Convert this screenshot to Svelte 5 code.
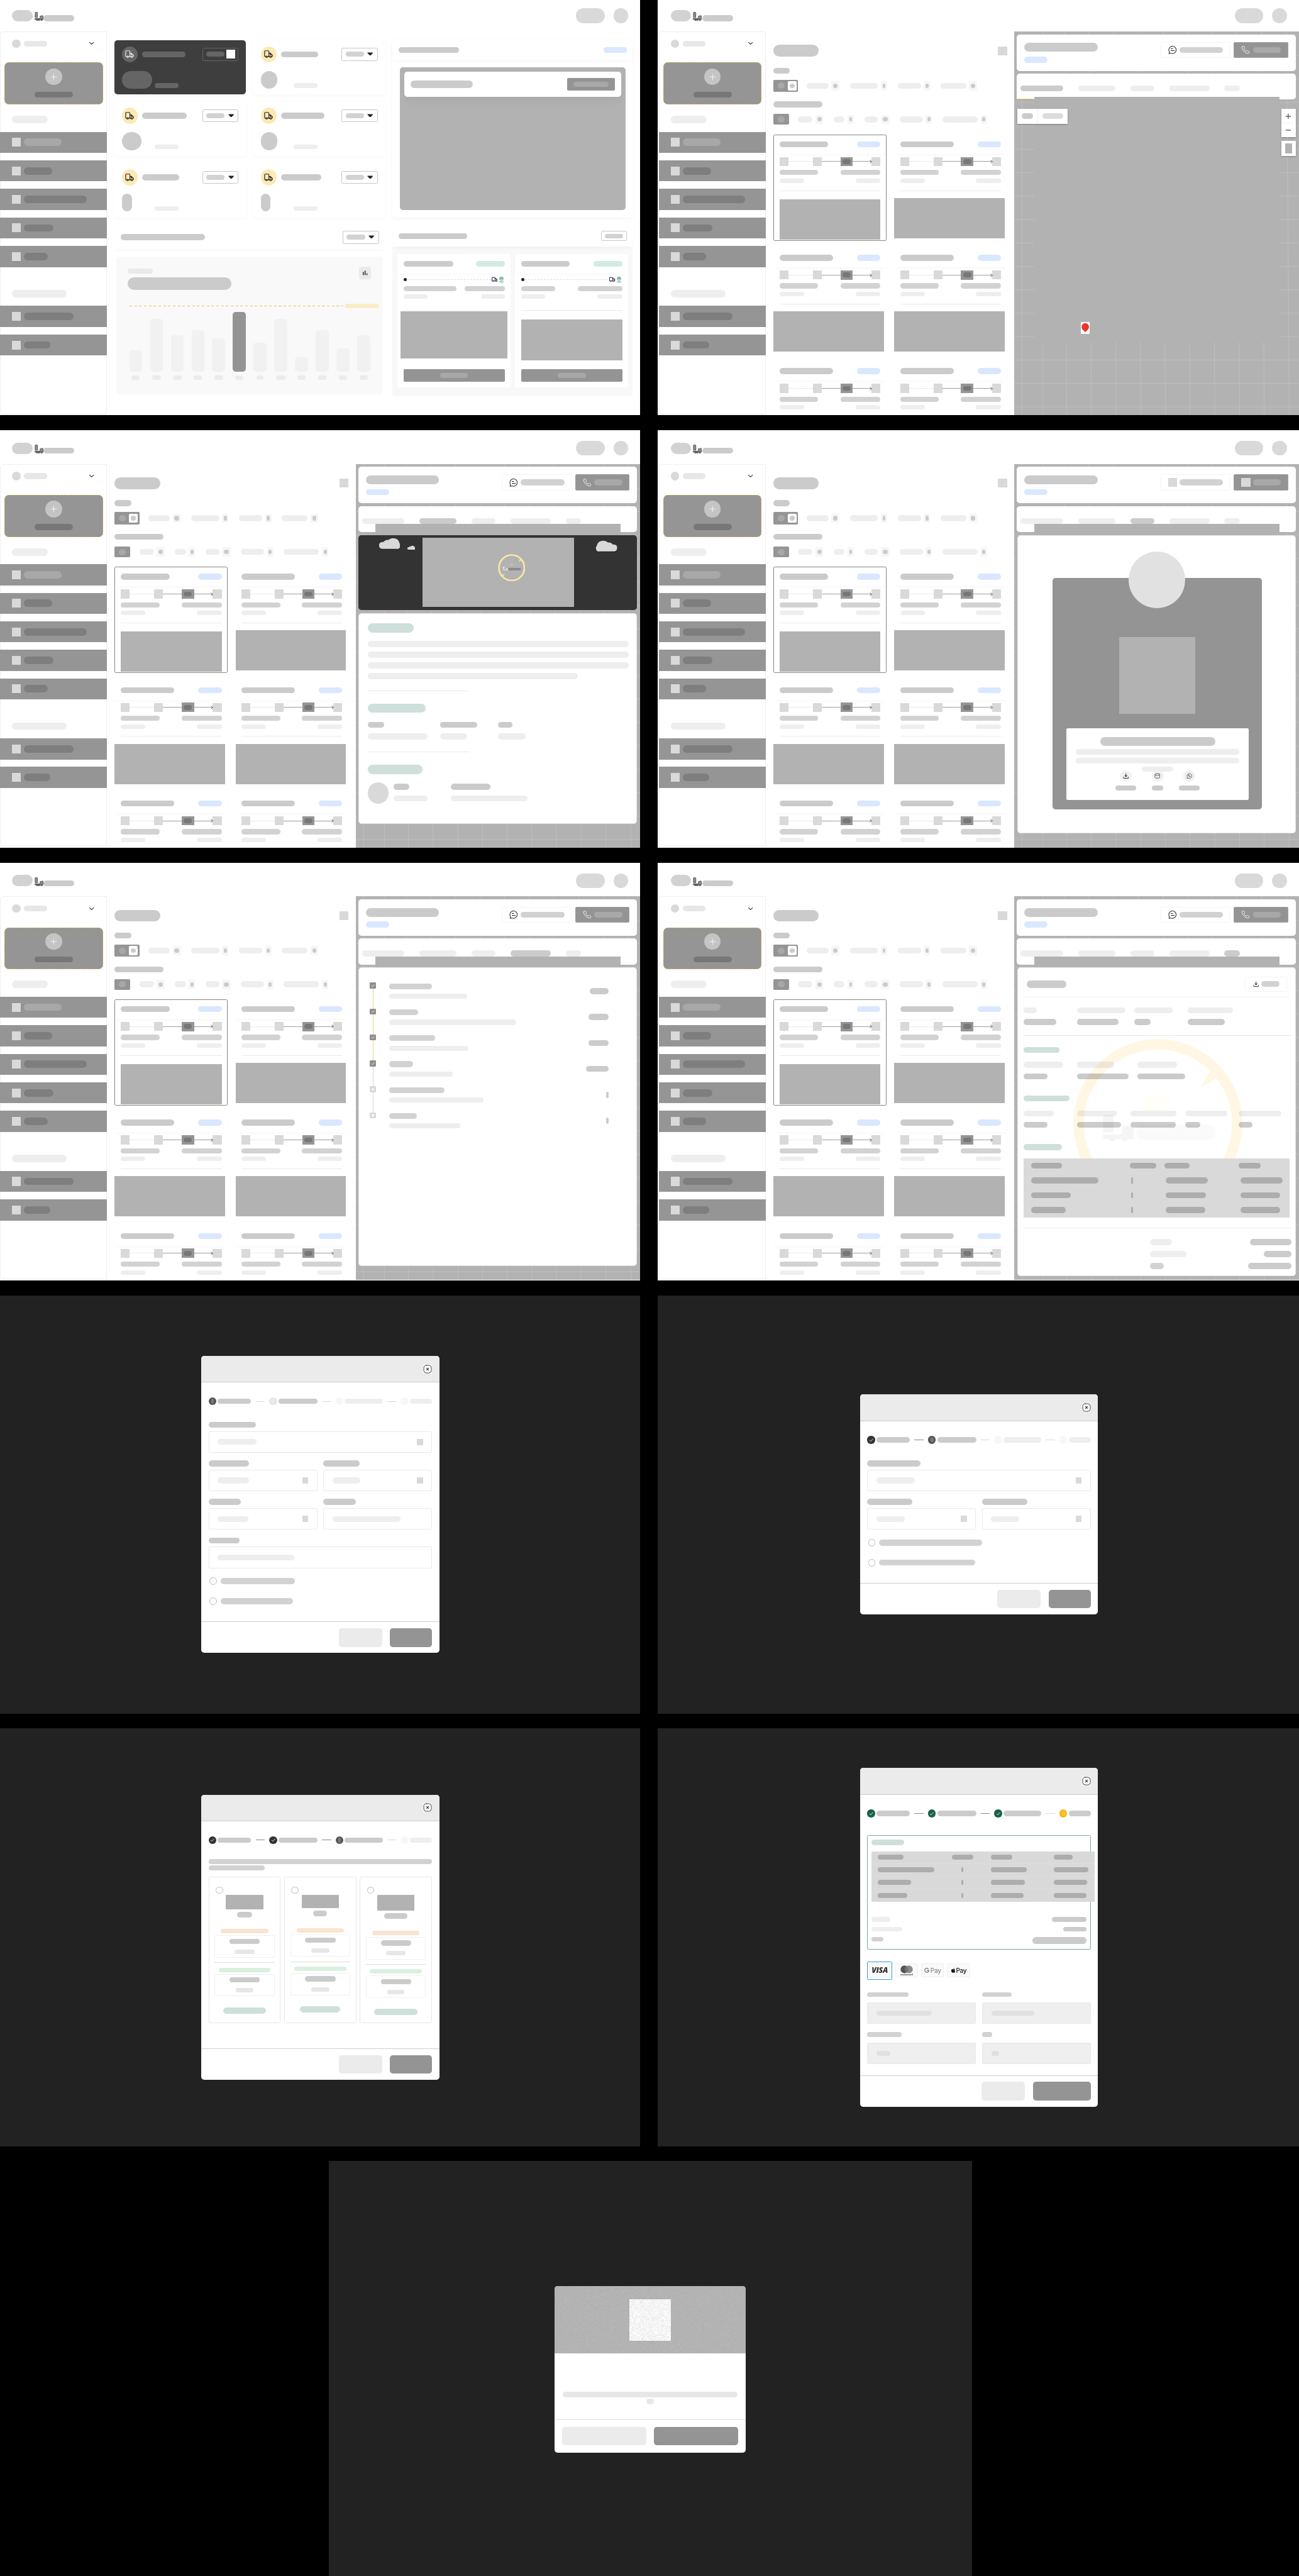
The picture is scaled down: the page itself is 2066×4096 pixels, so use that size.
<script>
  const stats = [
    { title: 116, value: 81, dark: true },
    { title: 100, value: 44 },
    { title: 120, value: 53 },
    { title: 117, value: 44 },
    { title: 99, value: 27 },
    { title: 108, value: 26 }
  ];
  const chart = [
    [58, 22], [142, 23], [98, 24], [112, 22], [90, 24], [161, 22],
    [78, 18], [142, 25], [39, 22], [112, 21], [63, 23], [98, 23]
  ];
  const navMain = [102, 77, 169, 80, 64];
  const navMore = [134, 71];
  const statusTabs = [[58, 22, 12], [76, 17, 8], [63, 17, 8], [69, 21, 11]];
  const typeTabs = [[39, 21, 12], [30, 17, 8], [37, 23, 14], [62, 17, 8], [95, 18, 8]];
  const shipments = [
    { id: 134, from: 143, to: 108, d1: 65, d2: 63, wide: true },
    { id: 131, from: 91, to: 121, d1: 65, d2: 68, wide: false }
  ];
  const detailTabs = [115, 101, 65, 109, 42];
  const history = [
    [116, 211, 52, true], [78, 342, 55, true], [123, 214, 55, true],
    [65, 171, 61, true], [149, 255, 8, false], [75, 191, 8, false]
  ];
  const invoiceRows = [[83, 71, 69, 60], [182, 6, 114, 114], [107, 6, 108, 108], [94, 6, 107, 107]];
  const paymentRows = [[69, 59, 58, 51], [153, 5, 96, 94], [90, 5, 91, 91], [79, 5, 89, 89]];
  const plans = [
    { img: 40, name: 40, a: 81, b: 53, c: 80, d: 47, total: 115 },
    { img: 37, name: 37, a: 82, b: 49, c: 84, d: 50, total: 109 },
    { img: 44, name: 62, a: 82, b: 52, c: 82, d: 46, total: 118 }
  ];
  const stepWidths = [90, 105, 102, 60];
  const gridX = [142, 208.6, 275.3, 342, 408.5, 475, 541.5, 608.5, 675, 742.5];
  const gridY = Array.from({ length: 16 }, (_, i) => 150 - 85 + i * 63.2);
</script>

{#snippet bar(w, tone = 'c', h = 16)}
  <i class="bar {tone}" style:width="{w}px" style:height="{h}px"></i>
{/snippet}

{#snippet truck()}
  <svg class="truck" viewBox="0 0 24 24" fill="none" stroke="currentColor" stroke-width="2" stroke-linecap="round" stroke-linejoin="round">
    <path d="M4.500 18.500H3.200A1.700 1.700 0 0 1 1.500 16.800V5A2 2 0 0 1 3.500 3H11a2 2 0 0 1 2 2V18.500H9" />
    <path d="M13 9.500h3.600a2.500 2.500 0 0 1 2 1.200l1.600 2.500 2.300 1.300v2.500a1.500 1.500 0 0 1-1.500 1.500M13 18.500h2.500M16.500 10v3.500h4" />
    <circle cx="6.800" cy="19" r="2" /><circle cx="18" cy="19" r="2" />
  </svg>
{/snippet}

{#snippet mixer()}
  <svg class="mixer" viewBox="0 0 24 24" fill="#8d8d8d" stroke="#3a3a3a" stroke-width="1.300">
    <rect x="1.500" y="1" width="6.500" height="14" rx="1.500" />
    <path d="M1 17.500h14v-6.500h3l1.500-1h3l.500 10.500H1z" />
    <circle cx="7" cy="21.500" r="2" /><circle cx="12" cy="21.500" r="2" /><circle cx="19" cy="21.500" r="2" />
  </svg>
{/snippet}

{#snippet chat()}
  <svg class="ic24" viewBox="0 0 24 24" fill="none" stroke="#222" stroke-width="1.700" stroke-linecap="round" stroke-linejoin="round">
    <path d="M2.800 17A9.900 9.900 0 1 1 7.500 21.400L2 22.400c.8-1.600 1.300-3.200.8-5.400z" />
    <path d="M7.500 9.500h4.500M7.500 14.500h9" />
  </svg>
{/snippet}

{#snippet phone()}
  <svg class="ic24" viewBox="0 0 24 24" fill="none" stroke="#fff" stroke-width="1.500" stroke-linejoin="round">
    <path d="M3 2.800h3.600c1.500 0 3.300 3.600 2.800 4.800-.5 1.300-2 1.800-1.300 3.200 1 2 2.800 3.900 5 5 1.500.7 2-.8 3.200-1.300 1.300-.5 5.200 1.600 5.200 3v2.400c0 1.500-1.800 2.100-4 1.800C10.500 20.700 3.300 13.600 2.200 6.700c-.3-1.800-.2-3.600.8-3.900z" />
  </svg>
{/snippet}

{#snippet download()}
  <svg class="ic16" viewBox="0 0 16 16" fill="none" stroke="#333" stroke-width="1.700" stroke-linecap="round" stroke-linejoin="round">
    <path d="M8 1.500v8M5 7l3 3 3-3M1.500 11v1.500A2 2 0 0 0 3.500 14.500h9a2 2 0 0 0 2-2V11" />
  </svg>
{/snippet}

{#snippet check()}
  <svg class="check" viewBox="0 0 16 16" fill="none" stroke="#fff" stroke-width="1.500" stroke-linecap="round" stroke-linejoin="round"><path d="M4 8.800l2.700 2.600L12.300 5.300" /></svg>
{/snippet}

{#snippet cloud(cls)}
  <svg class="cloud {cls}" viewBox="0 0 57 34">
    <path d="M9 34a9.500 9.500 0 0 1 0-19h3a15 15 0 0 1 13-6 17 17 0 0 1 29 9 8 8 0 0 1-5 15z" fill="#222" />
    <path d="M9 32a9.500 9.500 0 0 1 0-19h3A15 15 0 0 1 25 7.500 17 14 0 0 1 54.500 16a8 9 0 0 1-6 16z" fill="#d9d9d9" />
  </svg>
{/snippet}

{#snippet badge(cls)}
  <svg class={cls} viewBox="0 0 460 460">
    <circle cx="230" cy="230" r="214" fill="none" stroke="#fde6a6" stroke-width="28" />
    <path d="M371 88l-26 45 43-26zM89 372l26-45-43 26z" fill="#fde6a6" />
    <rect class="tag" x="191" y="155" width="78" height="41" rx="20" />
    <g class="mark">
      <rect x="82" y="208" width="28" height="46" rx="5" />
      <path d="M82 259h52v-18q0-5 5-5h14q12 2 12 14v16q0 6-6 6H92q-10 0-10-6z" />
      <circle cx="107" cy="271" r="8" /><circle cx="140" cy="271" r="8" />
    </g>
    <rect class="name" x="171" y="233" width="215" height="41" rx="20" />
  </svg>
{/snippet}

{#snippet header()}
  <header class="top">
    {@render bar(56, 'd', 31)}
    {@render mixer()}
    <span class="brand">{@render bar(84, 'c', 16)}</span>
    <span class="grow"></span>
    {@render bar(77, 'd2', 40)}
    {@render bar(40, 'd2', 40)}
  </header>
{/snippet}

{#snippet sidebar()}
  <aside class="side">
    <div class="account">
      {@render bar(23, 'd2', 23)}
      {@render bar(62, 'e7', 16)}
      <svg viewBox="0 0 16 10" fill="none" stroke="#222" stroke-width="1.700" stroke-linecap="round" stroke-linejoin="round"><path d="M2.500 2.500L8 7.500l5.500-5" /></svg>
    </div>
    <div class="create">
      <span class="plus"><svg viewBox="0 0 20 20" stroke="#fff" stroke-width="1.500"><path d="M10 1v18M1 10h18" /></svg></span>
      {@render bar(104, 'x77')}
    </div>
    <div class="navlabel">{@render bar(97, 'e', 20)}</div>
    <nav>
      {#each navMain as w, i}
        <a href="#nav"><i class="sq"></i>{@render bar(w, i === 0 ? 'a9' : 'x7f', 20)}</a>
      {/each}
    </nav>
    <div class="navlabel second">{@render bar(148, 'e', 20)}</div>
    <nav>
      {#each navMore as w}
        <a href="#nav"><i class="sq"></i>{@render bar(w, 'x7f', 20)}</a>
      {/each}
    </nav>
  </aside>
{/snippet}

{#snippet dropdown(dark = false)}
  <span class="drop" class:dark>
    {@render bar(50, dark ? 'x66' : 'd', 13)}
    {#if dark}
      <i class="blank"></i>
    {:else}
      <svg viewBox="0 0 16 10"><path d="M1 1h14v1.500L9.500 8.500h-3L1 2.500z" fill="#222" /></svg>
    {/if}
  </span>
{/snippet}

{#snippet list()}
  <section class="list">
    <div class="listhead">{@render bar(123, 'c', 32)}<i class="sq"></i></div>
    <div class="l1">{@render bar(45)}</div>
    <div class="tabs t1">
      <span class="on">{@render bar(19, 'a9', 17)}<b>{@render bar(14, 'c', 12)}</b></span>
      {#each statusTabs as [w, b, e]}
        <span class="tab">{@render bar(w, 'e')}<b style:width="{b}px">{@render bar(e, 'c', 12)}</b></span>
      {/each}
    </div>
    <div class="l2">{@render bar(133)}</div>
    <div class="tabs t2">
      <span class="on short">{@render bar(19, 'a9', 17)}</span>
      {#each typeTabs as [w, b, e]}
        <span class="tab">{@render bar(w, 'e')}<b style:width="{b}px">{@render bar(e, 'c', 12)}</b></span>
      {/each}
    </div>
    <div class="cards">
      {#each [0, 1, 2, 3, 4, 5] as n}
        <article class="order" class:selected={n === 0}>
          <div class="ohead">{@render bar(n === 0 ? 132 : 145)}{@render bar(63, 'blue')}</div>
          <div class="route">
            <i class="sq"></i><i class="dots"></i><i class="sq"></i><i class="ln"></i>
            <span class="tagbox">{@render bar(22, 'x77', 13)}</span>
            <i class="ln arrow"></i><i class="sq"></i>
          </div>
          <div class="pair p1">{@render bar(105, 'd', 14)}{@render bar(108, 'd', 14)}</div>
          <div class="pair p2">{@render bar(67, 'e', 12)}{@render bar(67, 'e', 12)}</div>
          <hr />
          <div class="pic"></div>
        </article>
      {/each}
    </div>
  </section>
{/snippet}

{#snippet detail(active, boxed, body)}
  <section class="map">
    <svg class="gridlines" viewBox="0 0 768 1035" stroke="#c1c1c1" stroke-width="1.500">
      <path d="M20.600 0V1035M77 0V1035" />
      {#each gridX as x}<path d="M{x - 7} 0L{x} 1035" />{/each}
      {#each gridY as y}<path d="M0 {y}H768" />{/each}
    </svg>
    <div class="dhead">
      <div class="dtitle">{@render bar(198, 'c', 24)}{@render bar(63, 'blue')}</div>
      <span class="btn chatbtn">{#if boxed}<i class="sq"></i>{:else}{@render chat()}{/if}{@render bar(118, 'd')}</span>
      <span class="btn callbtn">{#if boxed}<i class="sq"></i>{:else}{@render phone()}{/if}{@render bar(76, 'a9')}</span>
    </div>
    <div class="dtabs" class:first={active === 0}>
      {#each detailTabs as w, i}{@render bar(w, i === active ? 'c' : 'e')}{/each}
    </div>
    <div class="plate" class:tall={active === 0}></div>
    {@render body()}
  </section>
{/snippet}

{#snippet mapBody()}
  <div class="toggle"><span>{@render bar(31)}</span><span>{@render bar(57, 'dd')}</span></div>
  <div class="zoomer">
    <div class="pm">
      <svg viewBox="0 0 20 20" stroke="#666" stroke-width="2.500"><path d="M10 3v14M3 10h14" /></svg>
      <svg viewBox="0 0 20 20" stroke="#666" stroke-width="2.500"><path d="M3 10h14" /></svg>
    </div>
    <div class="reset"><i></i></div>
  </div>
  <svg class="pin" viewBox="0 0 24 32"><rect width="24" height="32" fill="#fff" /><path d="M12 28c-1.500-4-10-7-10-15a10 10 0 0 1 20 0c0 8-8.500 11-10 15z" fill="#ea3628" /></svg>
{/snippet}

{#snippet detailsBody()}
  <div class="hero">
    {@render cloud('left')}{@render cloud('small')}{@render cloud('right')}
    <div class="photo">{@render badge('stamp')}</div>
  </div>
  <div class="sheet info">
    {@render bar(124, 'teal', 24)}
    <div class="para">{@render bar(704, 'e')}{@render bar(704, 'e')}{@render bar(704, 'e')}{@render bar(567, 'e')}</div>
    <hr />
    {@render bar(156, 'teal', 24)}
    <div class="facts">
      <div>{@render bar(44)}{@render bar(161, 'e')}</div>
      <div>{@render bar(99)}{@render bar(73, 'e')}</div>
      <div>{@render bar(40)}{@render bar(75, 'e')}</div>
    </div>
    <hr />
    {@render bar(148, 'teal', 24)}
    <div class="driver">
      {@render bar(57, 'd2', 57)}
      <div>{@render bar(44)}{@render bar(93, 'e')}</div>
      <div>{@render bar(107)}{@render bar(207, 'e')}</div>
    </div>
  </div>
{/snippet}

{#snippet ticketBody()}
  <div class="sheet ticket">
    <div class="dark">
      <i class="face"></i>
      <div class="qr"></div>
      <div class="share">
        {@render bar(311, 'c', 24)}
        {@render bar(441, 'e', 14)}
        {@render bar(441, 'e', 14)}
        {@render bar(85, 'e', 14)}
        <div class="actions">
          <div><span>{@render download()}</span>{@render bar(55, 'c', 12)}</div>
          <div>
            <span><svg class="ic16" viewBox="0 0 16 16" fill="none" stroke="#333" stroke-width="1.300"><rect x="1.500" y="2" width="13" height="12" rx="3" /><path d="M2 5q6 5 12 0" /></svg></span>
            {@render bar(30, 'c', 12)}
          </div>
          <div>
            <span><svg class="ic16" viewBox="0 0 16 16" fill="none" stroke="#333" stroke-width="1.200"><path d="M2.500 11.500A6.500 6.500 0 1 1 5 14L1.500 14.700z" /><path d="M5.500 5q1-1 1.500.8-1 1 1.800 3.200 1-1 2 .5-1.500 2.500-4-.3Q5 6.500 5.500 5z" /></svg></span>
            {@render bar(56, 'c', 12)}
          </div>
        </div>
      </div>
    </div>
  </div>
{/snippet}

{#snippet historyBody()}
  <div class="sheet history">
    {#each history as [a, b, c, done], i}
      <div class="event">
        <span class="mark" class:done class:yellow={i < 3} class:last={i === 5}>
          {#if done}{@render check()}{:else}{@render bar(8, 'f5', 8)}{/if}
        </span>
        <div class="what">{@render bar(a, 'd')}{@render bar(b, 'e', 14)}</div>
        {@render bar(c, 'c')}
      </div>
    {/each}
  </div>
{/snippet}

{#snippet invoiceBody()}
  <div class="sheet invoice">
    {@render badge('watermark')}
    <div class="ihead">{@render bar(107, 'c', 20)}<span class="btn">{@render download()}{@render bar(49, 'd')}</span></div>
    <div class="cols c4">
      <div>{@render bar(36, 'e')}{@render bar(89)}</div>
      <div>{@render bar(131, 'e')}{@render bar(113)}</div>
      <div>{@render bar(104, 'e')}{@render bar(44)}</div>
      <div>{@render bar(122, 'e')}{@render bar(101)}</div>
    </div>
    <div class="group">
      {@render bar(97, 'teal')}
      <div class="cols c3">
        <div>{@render bar(107, 'e')}{@render bar(65)}</div>
        <div>{@render bar(101, 'e')}{@render bar(139)}</div>
        <div>{@render bar(107, 'e')}{@render bar(129)}</div>
      </div>
      {@render bar(124, 'teal')}
      <div class="cols c5">
        <div>{@render bar(81, 'e')}{@render bar(65)}</div>
        <div>{@render bar(108, 'e')}{@render bar(120)}</div>
        <div>{@render bar(125, 'e')}{@render bar(123)}</div>
        <div>{@render bar(114, 'e')}{@render bar(40)}</div>
        <div>{@render bar(116, 'e')}{@render bar(37)}</div>
      </div>
      {@render bar(103, 'teal')}
    </div>
    <div class="table">
      {#each invoiceRows as row, r}
        <div class="tr" class:head={r === 0}>{#each row as w}<span>{@render bar(w, 'ad')}</span>{/each}</div>
      {/each}
    </div>
    <div class="sums">
      <div>{@render bar(60, 'e')}{@render bar(111)}</div>
      <div>{@render bar(99, 'e')}{@render bar(74)}</div>
      <div>{@render bar(38, 'd')}{@render bar(116)}</div>
    </div>
  </div>
{/snippet}

{#snippet modal(current, skin, body, primary)}
  <div class="modal">
    <div class="mhead">
      <svg viewBox="0 0 24 24" fill="none" stroke="#292d32" stroke-width="1.500" stroke-linecap="round"><rect width="24" height="24" fill="#fff" stroke="none" /><rect x="1.800" y="1.800" width="20.400" height="20.400" rx="6.500" /><path d="M9.200 9.200l5.600 5.600M14.800 9.200l-5.600 5.600" stroke-width="1.800" /></svg>
    </div>
    <div class="steps {skin}">
      {#each stepWidths as w, i}
        {#if i > 0}<i class="dash" class:past={i <= current && i < 3}></i>{/if}
        <span class="dot" class:done={i < current} class:now={i === current} class:next={current === 0 && i === 1}>
          {#if i < current}{@render check()}{:else}<i></i>{/if}
        </span>
        {@render bar(w, i <= current || (current === 0 && i === 1) ? 'c' : 'e', 14)}
      {/each}
    </div>
    <div class="mbody">{@render body()}</div>
    <div class="mfoot"><i class="cancel"></i><i class="ok" style:width="{primary}px"></i></div>
  </div>
{/snippet}

{#snippet field(label, text, icon)}
  <div class="field">
    {@render bar(label)}
    <div class="input">{@render bar(text, 'e')}{#if icon}<i class="sq"></i>{/if}</div>
  </div>
{/snippet}

{#snippet radio(w)}
  <div class="radio"><i class="ring"></i>{@render bar(w, 'd')}</div>
{/snippet}

{#snippet form1()}
  <div class="fields">{@render field(128, 104, true)}</div>
  <div class="fields">{@render field(109, 85, true)}{@render field(99, 76, true)}</div>
  <div class="fields">{@render field(87, 82, true)}{@render field(88, 184, false)}</div>
  <div class="fields">{@render field(84, 207, false)}</div>
  <div class="radios">{@render radio(201)}{@render radio(196)}</div>
{/snippet}

{#snippet form2()}
  <div class="fields">{@render field(144, 104, true)}</div>
  <div class="fields">{@render field(122, 76, true)}{@render field(122, 76, true)}</div>
  <div class="radios">{@render radio(278)}{@render radio(260)}</div>
{/snippet}

{#snippet form3()}
  <div class="intro">{@render bar(603, 'd', 14)}{@render bar(152, 'd', 14)}</div>
  <div class="plans">
    {#each plans as p}
      <div class="plan">
        <i class="ring"></i>
        <div class="logo" style:height="{p.img}px"></div>
        {@render bar(p.name)}
        <div class="price orange">{@render bar(128, 'peach', 12)}<div>{@render bar(p.a, 'c', 14)}{@render bar(p.b, 'e7', 12)}</div></div>
        <hr />
        <div class="price">{@render bar(140, 'mint', 12)}<div>{@render bar(p.c, 'c', 14)}{@render bar(p.d, 'e7', 12)}</div></div>
        <span class="total">{@render bar(p.total, 'teal', 16)}</span>
      </div>
    {/each}
  </div>
{/snippet}

{#snippet form4()}
  <div class="summary">
    {@render bar(87, 'teal', 14)}
    <div class="table">
      {#each paymentRows as row, r}
        <div class="tr" class:head={r === 0}>{#each row as w}<span>{@render bar(w, 'ad', 14)}</span>{/each}</div>
      {/each}
    </div>
    <div class="sums">
      <div>{@render bar(51, 'e', 13)}{@render bar(93, 'c', 13)}</div>
      <div>{@render bar(83, 'e', 13)}{@render bar(63, 'c', 13)}</div>
      <div>{@render bar(32, 'd', 13)}{@render bar(146, 'c', 20)}</div>
    </div>
  </div>
  <div class="pay">
    <span class="chosen"><b class="visa">VISA</b></span>
    <b class="mc">
      <svg viewBox="0 0 34 22"><circle cx="11" cy="11" r="10.500" fill="#555" /><circle cx="23" cy="11" r="10.500" fill="#8c8c8c" /><path d="M17 2.400a10.500 10.500 0 0 1 0 17.200 10.500 10.500 0 0 1 0-17.200z" fill="#727272" /></svg>
      <small>mastercard</small>
    </b>
    <b class="gp">
      <svg viewBox="0 0 14 14" fill="none" stroke="#757575" stroke-width="2.200"><path d="M11.300 3A5.600 5.600 0 1 0 12.600 7.200H7.200" /></svg>Pay
    </b>
    <b class="ap">
      <svg viewBox="0 0 12 14" fill="#161616"><path d="M8.500 3.500c1 0 2 .6 2.500 1.400-2 1.200-1.700 4 .4 4.900-.6 1.700-1.700 3.500-2.900 3.500-.8 0-1.200-.5-2.200-.5s-1.400.5-2.200.5C2.500 13.300.6 10 .6 7.500c0-2.500 1.600-3.900 3.100-3.900 1.100 0 1.800.6 2.500.6s1.300-.7 2.300-.7zM8.300.3c.1 1.500-1 2.800-2.300 2.800C5.900 1.700 7 .4 8.300.3z" /></svg>Pay
    </b>
  </div>
  <div class="cardform">
    <div class="field">{@render bar(111, 'd', 13)}<div class="input">{@render bar(150, 'e0', 13)}</div></div>
    <div class="field">{@render bar(80, 'd', 13)}<div class="input">{@render bar(115, 'e0', 13)}</div></div>
    <div class="field">{@render bar(93, 'd', 13)}<div class="input">{@render bar(37, 'e0', 13)}</div></div>
    <div class="field">{@render bar(27, 'd', 13)}<div class="input">{@render bar(20, 'e0', 13)}</div></div>
  </div>
{/snippet}

{#snippet screen(row, active, boxed, body)}
  <div class="screen {row}">
    {@render header()}
    <div class="cols3">{@render sidebar()}{@render list()}{@render detail(active, boxed, body)}</div>
  </div>
{/snippet}

<main class="board">
  <div class="screen first">
    {@render header()}
    <div class="cols3">
      {@render sidebar()}
      <section class="dash1">
        <div class="stats">
          {#each stats as s}
            <article class="stat" class:dark={s.dark}>
              <div class="shead">
                <span class="badge">{@render truck()}</span>
                {@render bar(s.title, s.dark ? 'x66' : 'c')}
                {@render dropdown(s.dark)}
              </div>
              <div class="sval">
                <div class="num">{@render bar(s.value, s.dark ? 'x66' : 'c', 48)}</div>
                {@render bar(64, s.dark ? 'x66' : 'e', 13)}
              </div>
            </article>
          {/each}
        </div>
        <div class="strip">{@render bar(227)}{@render dropdown()}</div>
        <div class="chart">
          <div class="chead">
            <div>{@render bar(68, 'e9', 13)}{@render bar(279, 'c', 34)}</div>
            <span class="cicon"><svg viewBox="0 0 16 16" stroke="#444" stroke-width="3" stroke-linecap="round"><path d="M3 7v6M8 3v10M13 11v2" /></svg></span>
          </div>
          <div class="goal"><i></i>{@render bar(91, 'sand', 12)}</div>
          <div class="bars">
            {#each chart as [h], i}<i class:hot={i === 5} style:height="{h}px"></i>{/each}
          </div>
          <div class="months">
            {#each chart as [, w]}<span>{@render bar(w, 'eb', 12)}</span>{/each}
          </div>
        </div>
      </section>
      <section class="dash2">
        <div class="panel live">
          <div class="phead">{@render bar(163)}{@render bar(63, 'blue')}</div>
          <div class="livemap">
            <div class="float">{@render bar(169, 'c', 20)}<span class="solid">{@render bar(95, 'a9', 14)}</span></div>
          </div>
        </div>
        <div class="panel recent">
          <div class="phead">{@render bar(185)}<span class="ghost">{@render bar(49, 'd', 13)}</span></div>
          <div class="shiprow">
            {#each shipments as s}
              <article class="ship">
                <div class="ohead">{@render bar(s.id)}{@render bar(78, 'green')}</div>
                <div class="track">
                  <i class="black"></i><i class="dots"></i>
                  <svg class="van" viewBox="0 0 16 14" fill="none" stroke="#1b2036" stroke-width="1.700"><path d="M3 11.500H1V2h8v9.500H5M9 4.500h3l3 3v4h-1.500M9 11.500h2.500M12 5v2.500h3" /><circle cx="4" cy="11.800" r="1.200" /><circle cx="12.300" cy="11.800" r="1.200" /></svg>
                  <svg class="spot" viewBox="0 0 12 16" fill="none" stroke="#1c7a5c" stroke-width="1.600"><path d="M6 11.500C3 9 1.500 7.500 1.500 5a4.500 4.500 0 0 1 9 0c0 2.500-1.500 4-4.500 6.500zM.8 12.500q0 2.500 5.200 2.500t5.200-2.500" /><circle cx="6" cy="5.200" r="1.600" /></svg>
                </div>
                <div class="pair p1">{@render bar(s.from, 'd', 14)}{@render bar(s.to, 'd', 14)}</div>
                <div class="pair p2">{@render bar(s.d1, 'e', 12)}{@render bar(s.d2, 'e', 12)}</div>
                <hr />
                <div class="pic" class:wide={s.wide}></div>
                <span class="solid">{@render bar(76, 'a9', 13)}</span>
              </article>
            {/each}
          </div>
        </div>
      </section>
    </div>
  </div>

  {@render screen('first right', 0, false, mapBody)}
  {@render screen('second', 1, false, detailsBody)}
  {@render screen('second right', 2, true, ticketBody)}
  {@render screen('third', 3, false, historyBody)}
  {@render screen('third right', 4, false, invoiceBody)}

  <div class="night">{@render modal(0, 'gray', form1, 113)}</div>
  <div class="night right">{@render modal(1, 'gray', form2, 113)}</div>
  <div class="night">{@render modal(2, 'gray', form3, 113)}</div>
  <div class="night right">{@render modal(3, 'color', form4, 155)}</div>
  <div class="night final">
    <div class="confirm">
      <div class="banner">
        <i class="whitebox"></i>
        <svg class="grain" width="515" height="182">
          <filter id="grain"><feTurbulence type="fractalNoise" baseFrequency="0.550" numOctaves="2" seed="4" /><feColorMatrix type="matrix" values="1 0 0 0 0  0 1 0 0 0  0 0 1 0 0  0 0 0 3.200 -1.400" /></filter>
          <rect width="515" height="182" filter="url(#grain)" />
        </svg>
      </div>
      <div class="msg">{@render bar(473, 'e7', 16)}{@render bar(19, 'e7', 16)}</div>
      <div class="choice"><i class="cancel"></i><i class="ok"></i></div>
    </div>
  </div>
</main>

<style>
  :global(html), :global(body) { margin: 0; background: #000; overflow: hidden; }
  .board, .board :global(*) { box-sizing: border-box; }
  i, b { display: block; font-style: normal; }
  svg { display: block; flex: none; }
  hr { border: 0; margin: 0; height: 1px; background: #e9e9e9; }
  .board {
    width: 3506px; height: 6952px; zoom: 0.58924; background: #000; overflow: hidden;
    display: grid; grid-template-columns: 1728px 1730px; column-gap: 48px; row-gap: 40px;
    grid-template-rows: 1120px repeat(4, 1128px) 1120px;
    font-family: Inter, "Liberation Sans", sans-serif;
  }

  .bar { border-radius: 999px; flex: none; }
  .c { background: #cbcbcb; } .d { background: #d2d2d2; } .d2 { background: #d9d9d9; }
  .dd { background: #dcdcdc; } .e { background: #eee; } .e7 { background: #e7e7e7; }
  .e9 { background: #e9e9e9; } .eb { background: #ebebeb; } .e0 { background: #e0e0e0; }
  .f5 { background: #f5f5f5; } .a9 { background: #a8a8a8; } .ad { background: #adadad; }
  .x7f { background: #7e7e7e; } .x77 { background: #777; } .x66 { background: #656565; }
  .blue { background: #d9e7ff; } .green { background: #d4eae3; } .teal { background: #cfdfdb; }
  .peach { background: #f8e4cf; } .mint { background: #daf0df; } .sand { background: #f9edc8; }
  .sq { width: 24px; height: 24px; background: #d9d9d9; flex: none; }
  .grow { flex: 1; }
  .ic24 { width: 24px; height: 24px; }
  .ic16 { width: 16px; height: 16px; }

  .screen { background: #fff; overflow: hidden; }
  .screen.second { padding-top: 7px; }
  .screen.third { padding-top: 6px; }
  .screen.right { padding-left: 2px; }
  .top { height: 85px; width: 1728px; display: flex; align-items: center; padding: 0 32px; }
  .top .mixer { width: 24px; height: 24px; margin: 5px 0 0 5px; }
  .brand { margin-top: 14px; }
  .top > :global(.bar:last-child) { margin-left: 24px; }
  .cols3 { display: flex; width: 1728px; height: 1037px; }

  .side { width: 289px; height: 1033px; border: 1px solid #eee; border-radius: 8px 0 0 8px; flex: none; }
  .account { display: flex; align-items: center; gap: 9px; padding: 0 32px 0 31px; height: 24px; margin-top: 19px; }
  .account svg { width: 16px; height: 10px; margin-left: auto; }
  .create { width: 265px; height: 113px; margin: 39px 0 0 11px; border: 1.700px dashed #c6ab55; border-radius: 12px; background: #959595; display: flex; flex-direction: column; align-items: center; padding-top: 14px; gap: 18px; }
  .plus { width: 45px; height: 45px; border-radius: 50%; background: #c4c4c4; display: grid; place-items: center; }
  .plus svg { width: 18px; height: 18px; }
  .navlabel { padding: 31px 0 23px 31px; }
  .navlabel.second { padding-top: 62px; }
  nav { display: flex; flex-direction: column; gap: 20px; margin: 0 -1px; }
  nav a { height: 57px; background: #959595; display: flex; align-items: center; gap: 8px; padding-left: 32px; }

  .dash1 { width: 751px; padding: 24px 0 0 20px; flex: none; }
  .stats { display: grid; grid-template-columns: 355px 356px; gap: 20px; }
  .stat { height: 146px; border-radius: 8px; padding: 16px 20px; background: #fff; box-shadow: 0 3px 12px rgba(0,0,0,.03); }
  .stat.dark { background: #3e3e3e; }
  .shead { display: flex; align-items: center; gap: 12px; }
  .badge { width: 43px; height: 43px; border-radius: 50%; background: #fce9b4; color: #222; display: grid; place-items: center; }
  .dark .badge { background: #656565; color: #e8e8e8; }
  .truck { width: 24px; height: 24px; }
  .drop { width: 98px; height: 35px; border: 1px solid #c6c6c6; border-radius: 4px; display: flex; align-items: center; padding-left: 9px; gap: 9px; margin-left: auto; }
  .drop svg { width: 16px; height: 10px; }
  .drop.dark { border-color: #636363; gap: 4px; }
  .blank { width: 24px; height: 24px; background: #fff; }
  .sval { display: flex; align-items: flex-end; gap: 8px; margin-top: 23px; height: 48px; }
  .num { width: 81px; height: 48px; }
  .sval > :global(.bar) { margin-bottom: 2px; }
  .strip { height: 61px; margin: 25px 0 20px; display: flex; align-items: flex-start; padding: 11px 17px 0; box-shadow: 0 5px 8px -2px rgba(0,0,0,.03); }
  .strip > :global(.bar) { margin-top: 9px; }
  .chart { width: 720px; height: 372px; margin-left: 5px; border-radius: 8px; background: #f9f9f9; padding: 27px 0 0 31px; }
  .chead { display: flex; justify-content: space-between; padding-right: 32px; }
  .chead > div { display: flex; flex-direction: column; gap: 10px; padding-top: 5px; }
  .cicon { width: 33px; height: 34px; border-radius: 6px; background: #eaeaea; display: grid; place-items: center; }
  .cicon svg { width: 16px; height: 16px; }
  .goal { display: flex; align-items: center; gap: 6px; margin: 38px 0 0 4px; }
  .goal i:first-child { width: 577px; height: 1.700px; background: repeating-linear-gradient(90deg, #e8c25a 0 7px, transparent 7px 13px); }
  .bars { display: flex; align-items: flex-end; gap: 21px; height: 161px; margin: 10px 0 0 4px; }
  .bars i { width: 35px; border-radius: 8px; background: #f1f1f1; }
  .bars .hot { background: #949494; }
  .months { display: flex; gap: 21px; margin: 10px 0 0 4px; }
  .months span { width: 35px; display: grid; justify-items: center; }

  .dash2 { padding: 24px 0 0 19px; }
  .panel { width: 649px; border-radius: 8px; box-shadow: 0 2px 10px rgba(0,0,0,.045); }
  .phead { display: flex; justify-content: space-between; align-items: center; padding: 0 16px 0 17px; height: 52px; box-shadow: 0 7px 12px -3px rgba(0,0,0,.04); }
  .live { height: 478px; }
  .livemap { margin: 20px; height: 386px; border-radius: 8px; background: #b2b2b2; padding: 12px; }
  .float { height: 68px; border-radius: 8px; background: #fff; display: flex; align-items: center; justify-content: space-between; padding: 0 17px; box-shadow: 0 14px 24px rgba(0,0,0,.04); }
  .solid { display: grid; place-items: center; width: 129px; height: 34px; background: #949494; border-radius: 3px; }
  .recent { margin-top: 25px; height: 458px; background: #f8f8f8; box-shadow: none; }
  .recent .phead { height: 54px; background: #fff; padding-bottom: 4px; }
  .ghost { width: 69px; height: 27px; border: 1px solid #c6c6c6; border-radius: 4px; display: grid; place-items: center; }
  .shiprow { display: flex; gap: 12px; padding: 20px 13px; }
  .ship { width: 306px; height: 359px; background: #fff; border-radius: 4px; padding: 0 16px 0 17px; }
  .ohead { display: flex; align-items: center; justify-content: space-between; height: 52px; margin: 0 -16px; padding: 0 16px; box-shadow: 0 5px 10px -3px rgba(0,0,0,.045); }
  .track { display: flex; align-items: center; height: 16px; margin-top: 8px; gap: 2px; }
  .black { width: 9px; height: 9px; border-radius: 50%; background: #222; }
  .track .dots { flex: 1; border-top: 1px dashed #ddd; }
  .van { width: 16px; height: 14px; }
  .spot { width: 12px; height: 16px; margin: 0 3px 0 2px; }
  .pair { display: flex; justify-content: space-between; }
  .ship .p1 { margin-top: 10px; }
  .ship .p2 { margin-top: 9px; }
  .ship hr { margin-top: 29px; }
  .pic { background: #b2b2b2; }
  .ship .pic { height: 109px; margin: 26px 0 24px; }
  .ship .pic.wide { height: 126px; margin: 4px -8px 29px; }
  .ship .solid { width: 273px; }

  .list { width: 671px; height: 1035px; overflow: hidden; padding: 36px 20px 0; flex: none; }
  .listhead { display: flex; justify-content: space-between; align-items: center; }
  .l1 { margin-top: 30px; } .l2 { margin-top: 26px; }
  .tabs { display: flex; align-items: center; gap: 28px; }
  .t1 { margin-top: 16px; height: 33px; } .t2 { margin-top: 18px; height: 29px; }
  .on { width: 67px; height: 33px; margin-right: -4px; background: #959595; border-radius: 3px; display: flex; align-items: center; gap: 8px; padding-left: 12px; }
  .on.short { width: 43px; height: 29px; }
  .tab { display: flex; align-items: center; gap: 8px; }
  .tabs b { height: 25px; background: #f6f6f6; border-radius: 3px; display: grid; place-items: center; }
  .on b { width: 24px; background: #fff; }
  .cards { margin-top: 26px; display: grid; grid-template-columns: 306px 305px; gap: 19.500px 20px; }
  .order { height: 286.500px; border: 1px solid transparent; border-radius: 4px; padding: 0 15px; }
  .order.selected { border-color: #868686; }
  .order .ohead { margin: -1px -15px 0; padding: 0 15px; }
  .route { display: flex; align-items: center; height: 25px; margin-top: 8px; }
  .route .dots { flex: 67; border-top: 1.700px dotted #d4d4d4; }
  .ln { flex: 51; height: 1.700px; background: #a09f97; position: relative; }
  .arrow::after { content: ""; position: absolute; right: 0; top: -2px; width: 5px; height: 5px; border: solid #77746c; border-width: 1.500px 1.500px 0 0; transform: rotate(45deg); }
  .tagbox { width: 33px; height: 25px; background: #959595; display: grid; place-items: center; }
  .order .p1 { margin-top: 10px; } .order .p2 { margin-top: 9px; }
  .order hr { margin-top: 20px; }
  .order .pic { width: 298px; height: 109px; margin: 19.500px 0 0 -16px; }
  .order.selected .pic { width: 273px; margin: 23px 0 0; }

  .map { width: 768px; height: 1035px; background: #b2b2b2; position: relative; padding: 8px 8px 0 7px; flex: none; }
  .gridlines { position: absolute; left: 0; top: 0; width: 768px; height: 1035px; }
  .dhead { position: relative; height: 98px; background: #fff; border-radius: 8px; display: flex; align-items: flex-start; padding: 20px 21px 0 20px; }
  .dtitle { display: flex; flex-direction: column; gap: 13px; margin: 3px auto 0 0; }
  .btn { height: 43px; border: 1px solid #f4f4f4; border-radius: 3px; display: flex; align-items: center; gap: 7px; padding-left: 19px; }
  .chatbtn { width: 189px; margin-right: 9px; }
  .callbtn { width: 147px; background: #949494; border-color: #a0a0a0; }
  .dtabs { position: relative; height: 70px; margin-top: 8px; background: #fff; border-radius: 8px; padding: 32px 10px 0; display: flex; align-items: flex-start; gap: 40px; }
  .dtabs.first { border-bottom: 3px solid transparent; border-bottom-left-radius: 0; background: linear-gradient(#e8bc3f, #e8bc3f) 0 100% / 46px 3px no-repeat border-box, #fff border-box; }
  .plate { position: relative; width: 662px; height: 30px; margin: -22px 0 0 46px; background: #b2b2b2; }
  .plate.tall { height: 662px; margin-top: -7px; }
  .sheet { position: relative; margin-left: 1px; background: #fff; border-radius: 8px; border: 1px solid #e6e6e6; }
  .toggle { position: absolute; left: 8px; top: 208px; display: flex; height: 41px; background: #fff; box-shadow: 0 1px 4px rgba(0,0,0,.3); }
  .toggle span { display: grid; place-items: center; padding: 0 12px; }
  .toggle span:last-child { border-left: 1px solid #eee; padding: 0 11px; }
  .zoomer { position: absolute; left: 720px; top: 209px; display: flex; flex-direction: column; gap: 11px; }
  .pm, .reset { width: 40px; height: 76px; background: #fff; box-shadow: 0 1px 4px rgba(0,0,0,.3); display: grid; place-items: center; }
  .pm { background: linear-gradient(#e6e6e6, #e6e6e6) center / 28px 1px no-repeat, #fff; }
  .pm svg { width: 20px; height: 20px; }
  .reset { height: 40px; }
  .reset i { width: 18px; height: 28px; background: #b2b2b2; }
  .pin { position: absolute; left: 179px; top: 784px; width: 24px; height: 32px; }

  .hero { position: relative; height: 202px; margin-left: 1px; background: #333; border-radius: 8px; padding-top: 7px; }
  .photo { width: 409px; height: 187px; margin: 0 auto 0 172px; background: #b2b2b2; position: relative; }
  .stamp { position: absolute; left: 204px; top: 44px; width: 74px; height: 74px; }
  .stamp .tag { fill: #c3bf9f; } .stamp .mark { fill: #dcdcdc; } .stamp .name { fill: #8b8b8b; }
  .cloud { position: absolute; width: 57px; height: 34px; }
  .cloud.left { left: 55px; top: 6px; }
  .cloud.small { left: 131px; top: 28px; width: 21px; height: 13px; }
  .cloud.right { left: 641px; top: 13px; transform: scaleX(-1); }
  .info { height: 569px; margin-top: 8px; padding: 27px 23px; }
  .para { display: flex; flex-direction: column; gap: 13px; margin-top: 23px; }
  .info hr { width: 273px; margin: 31px 0 35px; }
  .facts, .driver { display: flex; margin-top: 25px; }
  .facts > div, .driver > div { display: flex; flex-direction: column; gap: 15px; }
  .facts > div:first-child { width: 196px; }
  .facts > div:nth-child(2) { width: 155px; }
  .facts + hr { margin-top: 33px; }
  .driver { margin-top: 23px; }
  .driver > div { padding-top: 4px; margin-left: 12px; width: 143px; }

  .ticket { height: 805px; padding-top: 114px; }
  .ticket .dark { width: 565px; height: 624px; margin-left: 93px; background: #949494; border-radius: 8px; position: relative; padding: 159px 0 0 38px; }
  .face { position: absolute; left: 206px; top: -72px; width: 153px; height: 153px; border-radius: 50%; background: #e1e1e1; }
  .qr { width: 205px; height: 207px; background: #b2b2b2; margin-left: 142px; }
  .share { width: 492px; height: 194px; margin-top: 40px; background: #fff; border-radius: 4px; padding-top: 23px; display: flex; flex-direction: column; align-items: center; gap: 9.500px; }
  .actions { display: flex; justify-content: center; margin-top: -14px; }
  .actions > div { width: 86px; display: flex; flex-direction: column; align-items: center; gap: 11px; }
  .actions span { width: 32px; height: 31px; border-radius: 50%; background: #f1f1f1; display: grid; place-items: center; }

  .history { height: 805px; padding: 39px 75px 0 29px; }
  .event { display: flex; height: 70px; }
  .event > :global(.bar) { margin: 15px 0 0 auto; }
  .event .mark { width: 16px; height: 16px; border-radius: 2px; background: #d9d9d9; display: grid; place-items: center; position: relative; }
  .event .mark.done { background: #8f8f8f; }
  .event .mark :global(.check) { width: 14px; height: 14px; }
  .event .mark::after { content: ""; position: absolute; left: 7px; top: 16px; width: 1.700px; height: 54px; background: #d6d6d6; }
  .event .mark.yellow::after { background: #eed384; }
  .event .mark.last::after { display: none; }
  .what { display: flex; flex-direction: column; gap: 12px; margin: 2px 0 0 36px; }

  .invoice { height: 833px; padding: 23px 15px 0; }
  .watermark { position: absolute; left: 147px; top: 189px; width: 460px; height: 460px; opacity: .320; z-index: 1; mix-blend-mode: multiply; }
  .watermark .tag { fill: #fffbea; } .watermark .mark { fill: #dedede; } .watermark .name { fill: #eee; }
  .ihead { display: flex; justify-content: space-between; height: 56px; border-bottom: 1px solid #efefef; padding: 0 8px; }
  .ihead > :global(.bar) { margin-top: 10px; }
  .ihead .btn { width: 113px; height: 40px; padding-left: 20px; }
  .cols { display: grid; }
  .cols > div { display: flex; flex-direction: column; gap: 15px; }
  .c4 { grid-template-columns: 144px 155px 144px 1fr; height: 104px; padding-top: 27px; border-bottom: 1px solid #e8e8e8; margin-right: -4px; }
  .c3 { grid-template-columns: 144px 163px 1fr; margin: 24px 0 44px; }
  .c5 { grid-template-columns: 144px 144px 149px 144px 1fr; margin: 24px 0 44px; }
  .group { padding-top: 30px; }
  .table { position: relative; z-index: 2; background: #d9d9d9; }
  .invoice .table { margin-top: 22px; width: 719px; }
  .tr { display: grid; align-items: center; }
  .invoice .tr { height: 40px; grid-template-columns: 270px 94px 201px 1fr; padding-left: 20px; }
  .invoice .tr.head { grid-template-columns: 267px 93px 201px 1fr; }
  .sums { display: flex; flex-direction: column; }
  .invoice .sums { margin: 28px -4px 0 0; border-top: 1px solid #eee; padding: 29px 0 0 341px; gap: 16px; }
  .sums > div { display: flex; justify-content: space-between; }

  .night { background: #222; display: grid; align-items: center; justify-items: start; padding-left: 543px; }
  .night.right { padding-left: 545px; }
  .night.final { grid-column: 1 / 3; justify-self: center; justify-items: center; width: 1736px; padding: 4px 0 0; margin-left: 4px; }
  .modal { width: 643px; background: #fff; border-radius: 8px; overflow: hidden; }
  .mhead { height: 72px; background: #ebebeb; border-bottom: 1px solid #cbcbcb; display: flex; align-items: center; justify-content: flex-end; padding-right: 20px; }
  .mhead svg { width: 24px; height: 24px; }
  .steps { display: flex; align-items: center; padding: 0 20px; height: 21px; margin-top: 40px; }
  .dot { width: 21px; height: 21px; border-radius: 50%; background: #f7f7f7; display: grid; place-items: center; margin-right: 4px; flex: none; }
  .dot > i { width: 8px; height: 13px; border-radius: 5px; background: transparent; }
  .dot.next { background: #e6e6e6; } .dot.next > i { background: #eaeaea; }
  .dot.now { background: #555; } .dot.now > i { background: #7b7b7b; }
  .dot.done { background: #333; }
  .color .dot.done { background: #176049; }
  .color .dot.now { background: #fbb615; } .color .dot.now > i { background: #f8c43c; }
  .dot :global(.check) { width: 16px; height: 16px; }
  .dash { width: 25px; height: 1.700px; margin: 0 12px; background: #d9d9d9; flex: none; }
  .dash.past { background: #888; }
  .mbody { padding: 45px 20px 0; }
  .fields { display: flex; gap: 16px; height: 104px; }
  .field { flex: 1; }
  .input { height: 58px; margin-top: 9px; border: 1px solid #e9e9e9; border-radius: 4px; display: flex; align-items: center; justify-content: space-between; padding: 0 23px; }
  .input .sq { width: 16px; height: 17px; }
  .radios { display: flex; flex-direction: column; gap: 34px; padding: 4px 0 45px 2px; }
  .radio { display: flex; align-items: center; gap: 10px; }
  .ring { width: 20px; height: 20px; border: 1.700px solid #b8b8b8; border-radius: 50%; flex: none; }
  .mfoot { height: 85px; border-top: 1px solid #cfcfcf; display: flex; align-items: center; justify-content: flex-end; gap: 22px; padding-right: 20px; }
  .cancel, .ok { width: 117px; height: 50px; border-radius: 8px; background: #ebebeb; }
  .ok { background: #949494; }

  .intro { display: flex; flex-direction: column; gap: 4px; margin-top: -5px; }
  .plans { display: grid; grid-template-columns: repeat(3, 194.300px); gap: 10px; margin: 16px 0 68px; }
  .plan { height: 396px; border: 1px solid #e6e6e6; border-radius: 4px; display: flex; flex-direction: column; align-items: center; padding: 25px 0 0; }
  .plan > .ring { align-self: flex-start; margin-left: 17px; }
  .logo { width: 101px; background: #b2b2b2; margin: 2px 0 6px; }
  .price { display: flex; flex-direction: column; align-items: center; gap: 5px; }
  .price.orange { margin-top: 31px; }
  .price > div { width: 162px; height: 61px; border: 1px solid #efefef; border-radius: 4px; display: flex; flex-direction: column; align-items: center; gap: 15px; padding-top: 8px; }
  .plan hr { width: 162px; margin: 12px 0 13px; background: #ddd; flex: none; }
  .total { margin-top: 30px; }

  .summary { height: 309px; margin-top: 3px; border: 1px solid #7ba89a; border-radius: 4px; padding: 11px 10px 0; }
  .summary .table { width: 602px; margin: 17px 0 41px; }
  .summary .tr { height: 34px; grid-template-columns: 226px 79px 169px 1fr; padding-left: 17px; border-bottom: 1px solid #dedede; }
  .summary .tr:last-child { border: 0; }
  .summary .tr.head { grid-template-columns: 199px 106px 170px 1fr; }
  .summary .sums { gap: 14px; }
  .pay { display: flex; align-items: center; gap: 8.500px; margin-top: 32px; }
  .pay b { width: 61.500px; height: 38px; background: #fafafa; border: 1px solid #efefef; border-radius: 3px; display: flex; align-items: center; justify-content: center; font-weight: 400; }
  .chosen { width: 67px; height: 49px; border: 1.700px solid #2f9ccb; border-radius: 3px; display: grid; place-items: center; }
  .pay .visa { width: 55px; font: italic 800 21px/1 "Open Sans", sans-serif; letter-spacing: -.5px; color: #333; }
  .pay .mc { flex-direction: column; }
  .mc svg { width: 34px; height: 22px; }
  .mc small { font-size: 6px; line-height: 7px; color: #222; font-weight: 600; }
  .gp { font-size: 17px; color: #757575; gap: 3px; letter-spacing: -.3px; }
  .gp svg, .ap svg { width: 14px; height: 14px; }
  .pay .ap { font-size: 17px; color: #161616; gap: 1px; font-weight: 500; letter-spacing: -.5px; }
  .cardform { display: grid; grid-template-columns: 1fr 1fr; gap: 22px 18px; margin: 34px 0 30px; }
  .cardform .input { margin-top: 15px; background: #efefef; }

  .confirm { width: 515px; height: 450px; background: #fff; border-radius: 8px; overflow: hidden; }
  .banner { height: 182px; background: #b2b2b2; position: relative; padding-top: 35px; }
  .whitebox { width: 113px; height: 113px; background: #fff; margin: 0 auto; }
  .grain { position: absolute; left: 0; top: 0; opacity: .55; }
  .msg { height: 179px; border-bottom: 1px solid #dcdcdc; padding-top: 103px; display: flex; flex-direction: column; align-items: center; gap: 3px; }
  .choice { display: flex; gap: 21px; padding: 19px 20px 0; }
  .choice i { flex: 1; height: 50px; }
</style>
